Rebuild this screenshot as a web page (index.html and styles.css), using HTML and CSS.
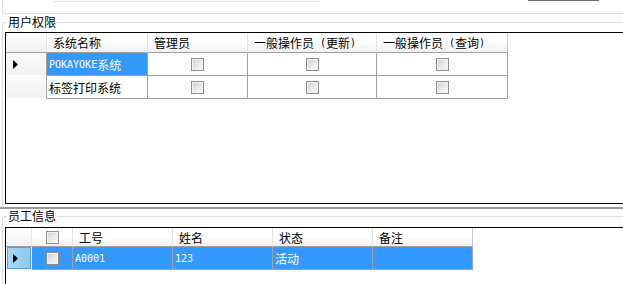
FILE: index.html
```html
<!DOCTYPE html>
<html lang="zh-CN">
<head>
<meta charset="utf-8">
<title>权限</title>
<link rel="stylesheet" href="styles.css">
</head>
<body>
<div class="form">
  <div class="topgroup">
    <div class="stub-text"></div>
    <div class="stub-btn"></div>
  </div>

  <fieldset class="group g1">
    <legend>用户权限</legend>
    <div class="grid grid1">
      <div class="row hdr">
        <div class="rh rh1 corner"></div>
        <div class="cell c1a">系统名称</div>
        <div class="cell c1b">管理员</div>
        <div class="cell c1c">一般操作员<span class="en"> (</span>更新<span class="en">)</span></div>
        <div class="cell c1d">一般操作员<span class="en"> (</span>查询<span class="en">)</span></div>
      </div>
      <div class="row data">
        <div class="rh rh1"><svg class="arrow" width="5" height="9" viewBox="0 0 5 9"><polygon points="0,0 5,4.5 0,9" fill="#000"/></svg></div>
        <div class="cell c1a sel"><span class="en">POKAYOKE</span>系统</div>
        <div class="cell c1b center"><span class="cb"></span></div>
        <div class="cell c1c center"><span class="cb"></span></div>
        <div class="cell c1d center"><span class="cb"></span></div>
      </div>
      <div class="row data">
        <div class="rh rh1"></div>
        <div class="cell c1a">标签打印系统</div>
        <div class="cell c1b center"><span class="cb"></span></div>
        <div class="cell c1c center"><span class="cb"></span></div>
        <div class="cell c1d center"><span class="cb"></span></div>
      </div>
    </div>
  </fieldset>

  <div class="splitter"></div>

  <fieldset class="group g2">
    <legend>员工信息</legend>
    <div class="grid grid2">
      <div class="row hdr hdr2">
        <div class="rh rh2 corner"></div>
        <div class="cell c2a center"><span class="cb"></span></div>
        <div class="cell c2b">工号</div>
        <div class="cell c2b">姓名</div>
        <div class="cell c2b">状态</div>
        <div class="cell c2b">备注</div>
      </div>
      <div class="row data selrow">
        <div class="rh rh2 rhsel"><svg class="arrow" width="5" height="9" viewBox="0 0 5 9"><polygon points="0,0 5,4.5 0,9" fill="#000"/></svg></div>
        <div class="cell c2a center"><span class="cb"></span></div>
        <div class="cell c2b"><span class="en">A0001</span></div>
        <div class="cell c2b"><span class="en">123</span></div>
        <div class="cell c2b">活动</div>
        <div class="cell c2b"></div>
      </div>
    </div>
  </fieldset>
</div>
</body>
</html>
```

FILE: styles.css
```css
html, body {
  margin: 0;
  padding: 0;
  background: #fff;
  overflow: hidden;
}

body {
  width: 623px;
  height: 284px;
  font-family: "Noto Sans CJK SC", "Noto Sans", sans-serif;
  font-size: 12px;
  color: #000;
}

.form {
  width: 623px;
  height: 284px;
  overflow: hidden;
}

/* remnant of the group above */
.topgroup {
  display: flex;
  align-items: flex-start;
  width: 720px;
  height: 14px;
  margin-left: 2px;
  box-sizing: border-box;
  border-left: 1px solid #d5dfe5;
  border-bottom: 1px solid #d5dfe5;
  border-bottom-left-radius: 3px;
}

.stub-text {
  width: 268px;
  height: 1px;
  margin-left: 49px;
  border-bottom: 1px solid #e3e3e3;
}

.stub-btn {
  width: 71px;
  height: 0;
  margin-left: 208px;
  border-top: 1px solid #707070;
}

/* group boxes */
.group {
  width: 720px;
  min-width: 0;
  margin: 1px 0 0 2px;
  border: 1px solid #d5dfe5;
  border-bottom: none;
  border-radius: 3px 3px 0 0;
  padding: 3px 0 3px 2px;
  box-sizing: border-box;
}

.group legend {
  margin-left: 2px;
  padding: 0 1px;
  font-size: 12px;
  line-height: 14px;
}

.g2 {
  margin-top: 0;
  padding-top: 4px;
}

.splitter {
  height: 2px;
  background: #999;
}

/* data grids */
.grid {
  width: 700px;
  box-sizing: border-box;
  border: 1px solid #000;
  border-right: none;
  background: #fff;
}

.grid1 {
  height: 172px;
}

.grid2 {
  height: 120px;
}

.row {
  display: flex;
}

.cell, .rh {
  box-sizing: border-box;
  flex: none;
  display: flex;
  align-items: center;
  white-space: pre;
}

.hdr {
  height: 20px;
}

.hdr2 {
  height: 19px;
}

.data {
  height: 23px;
}

.hdr .cell {
  padding-left: 6px;
  background: linear-gradient(#ffffff 0%, #ffffff 45%, #eeeff0 100%);
  border-right: 1px solid #e2e3e4;
  border-bottom: 1px solid #a0a0a0;
}

.hdr .cell:last-child {
  border-right: 1px solid #c8c8c8;
}

.data .cell {
  padding-left: 2px;
  border-right: 1px solid #a0a0a0;
  border-bottom: 1px solid #a0a0a0;
}

.cell.center {
  justify-content: center;
  padding-left: 0;
}

.hdr .cell.center {
  padding-left: 0;
}

.rh {
  background: linear-gradient(#fafafa, #f1f1f1);
  border-right: 1px solid #a0a0a0;
  border-bottom: 1px solid #ffffff;
  padding-left: 7px;
}

.rh.corner {
  background: linear-gradient(#ffffff, #f0f0f0);
  border-right: 1px solid #e2e3e4;
  border-bottom: 1px solid #a0a0a0;
}

.rh1 { width: 41px; }
.c1a { width: 101px; }
.c1b { width: 100px; }
.c1c { width: 129px; }
.c1d { width: 131px; }

.rh2 { width: 26px; }
.c2a { width: 41px; }
.c2b { width: 100px; }

.sel {
  background: #3399ff;
  color: #fff;
}

.selrow .cell {
  background: #3399ff;
  color: #fff;
  padding-left: 2px;
}

.selrow .cell.center {
  padding-left: 0;
}

.rh.rhsel {
  background: linear-gradient(90deg, #a8d8f8, #8ccaf2);
  border: 1px solid #5c9fd0;
  margin: 0 1px 1px 1px;
  width: 24px;
  padding-left: 5px;
}

.en {
  font-family: "DejaVu Sans Mono", "Liberation Mono", monospace;
  font-size: 10px;
}

.arrow {
  display: block;
}

.cb {
  display: block;
  width: 13px;
  height: 13px;
  box-sizing: border-box;
  border: 1px solid #8f8f8f;
  background: linear-gradient(135deg, #cfcfcf 0%, #e9e9e9 55%, #fbfbfb 100%);
  box-shadow: inset 0 0 0 1px #f2f2f2;
}
```
